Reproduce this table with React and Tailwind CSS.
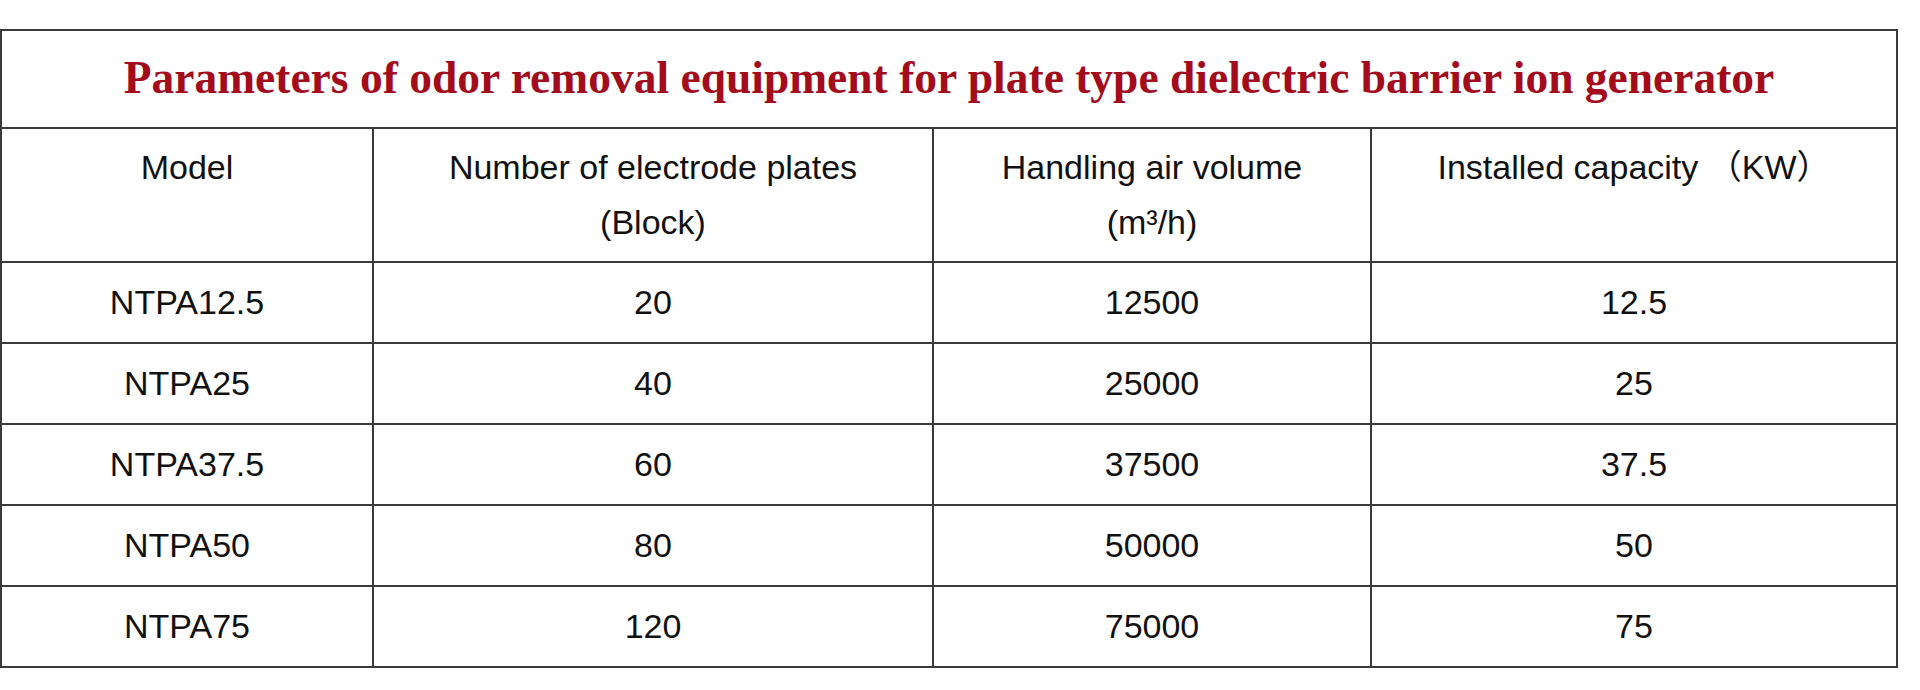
const rows = [
  ['NTPA12.5', '20', '12500', '12.5'],
  ['NTPA25', '40', '25000', '25'],
  ['NTPA37.5', '60', '37500', '37.5'],
  ['NTPA50', '80', '50000', '50'],
  ['NTPA75', '120', '75000', '75'],
]

export default function App() {
  const cell = 'border-2 border-[#3a3a3a] text-center align-middle'
  const head = 'border-2 border-[#3a3a3a] text-center align-top pt-[11px] leading-[55px]'
  return (
    <div className="bg-white w-[1920px] h-[690px] pt-[29px] font-['Liberation_Sans','Noto_Sans_CJK_SC',sans-serif] text-[34px] text-[#111]">
      <table className="w-[1896px] border-collapse table-fixed">
        <colgroup>
          <col className="w-[372px]" />
          <col className="w-[560px]" />
          <col className="w-[438px]" />
          <col className="w-[526px]" />
        </colgroup>
        <tbody>
          <tr>
            <td colSpan={4} className={`${cell} h-[98px] pb-[2px] font-['Liberation_Serif',serif] font-bold text-[45.5px] text-[#a20c1c]`}>
              Parameters of odor removal equipment for plate type dielectric barrier ion generator
            </td>
          </tr>
          <tr>
            <td className={`${head} h-[134px]`}>Model</td>
            <td className={head}>
              Number of electrode plates
              <br />
              (Block)
            </td>
            <td className={head}>
              Handling air volume
              <br />
              (m³/h)
            </td>
            <td className={head}>Installed capacity （KW）</td>
          </tr>
          {rows.map(r => (
            <tr key={r[0]}>
              {r.map((v, i) => (
                <td key={i} className={`${cell} h-[81px]`}>{v}</td>
              ))}
            </tr>
          ))}
        </tbody>
      </table>
    </div>
  )
}
